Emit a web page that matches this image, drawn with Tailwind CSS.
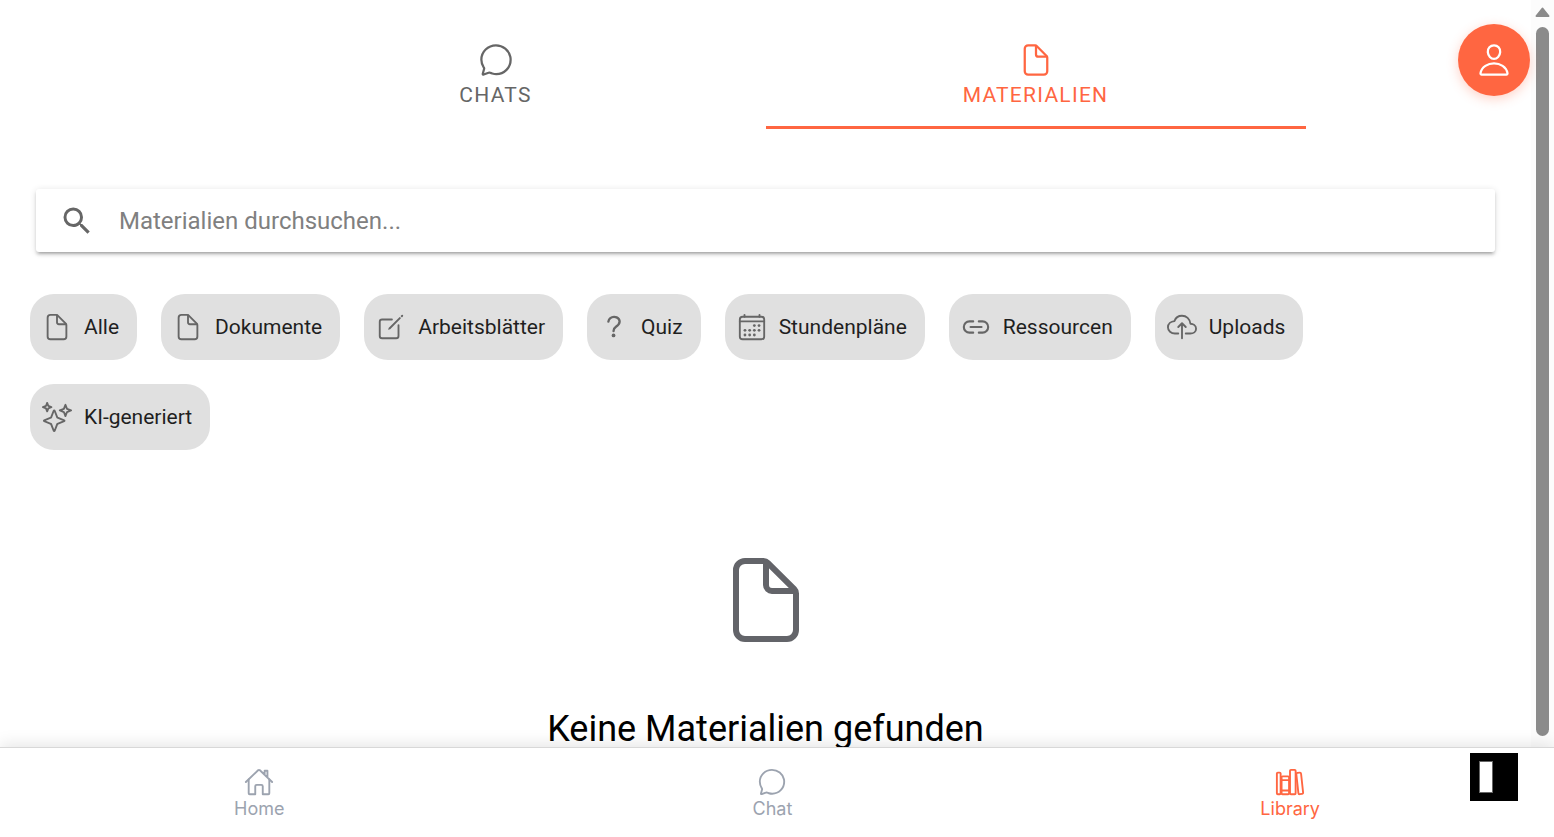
<!DOCTYPE html>
<html lang="de">
<head>
<meta charset="utf-8">
<meta name="viewport" content="width=device-width, initial-scale=1">
<title>Materialien</title>
<script src="https://cdn.jsdelivr.net/npm/@tailwindcss/browser@4"></script>
</head>
<body class="flex h-screen flex-col overflow-hidden bg-white font-['Roboto',sans-serif] text-black">

<svg class="hidden" aria-hidden="true">
  <symbol id="document" viewBox="0 0 512 512" fill="none" stroke="currentColor" stroke-width="32" stroke-linejoin="round" stroke-linecap="round">
    <path d="M416 221.25V416a48 48 0 01-48 48H144a48 48 0 01-48-48V96a48 48 0 0148-48h98.75a32 32 0 0122.62 9.37l141.26 141.26a32 32 0 019.37 22.62z"/>
    <path d="M256 56v120a32 32 0 0032 32h120"/>
  </symbol>
  <symbol id="chat" viewBox="0 0 512 512" fill="none" stroke="currentColor" stroke-width="32" stroke-linecap="round">
    <path d="M87.49 380c1.19-4.38-1.44-10.47-3.95-14.86a44.86 44.86 0 00-2.54-3.8 199.81 199.81 0 01-33-110C47.65 139.09 140.73 48 255.83 48 356.21 48 440 117.54 459.58 209.85a199 199 0 014.42 41.64c0 112.41-89.49 204.93-204.59 204.93-18.3 0-43-4.6-56.47-8.37s-26.92-8.77-30.39-10.11a31.09 31.09 0 00-11.12-2.07 30.71 30.71 0 00-12.09 2.43l-67.83 24.48a16 16 0 01-4.67 1.22 9.6 9.6 0 01-9.57-9.74 15.85 15.85 0 01.6-3.29z"/>
  </symbol>
</svg>

<div class="relative flex min-h-0 flex-1">
  <main class="min-w-0 flex-1 overflow-hidden">
    <div class="flex justify-center" role="tablist">
      <button role="tab" aria-selected="false" class="flex max-w-[540px] flex-1 flex-col items-center gap-0.5 border-b-3 border-transparent pt-[42px] pb-4 text-[21px] leading-[30px] tracking-[0.06em] text-[#666]">
        <svg class="size-9"><use href="#chat"/></svg>
        <span>CHATS</span>
      </button>
      <button role="tab" aria-selected="true" class="flex max-w-[540px] flex-1 flex-col items-center gap-0.5 border-b-3 border-[#ff6641] pt-[42px] pb-4 text-[21px] leading-[30px] tracking-[0.06em] text-[#ff6641]">
        <svg class="size-9"><use href="#document"/></svg>
        <span>MATERIALIEN</span>
      </button>
    </div>

    <div class="px-9 pt-[60px]">
      <label class="flex h-[63px] items-center rounded-[3px] bg-white pt-px pl-[23px] shadow-[0_3px_3px_0_rgba(0,0,0,0.14),0_4px_2px_-3px_rgba(0,0,0,0.2),0_1px_7px_0_rgba(0,0,0,0.12)]">
        <svg class="size-9 shrink-0 text-[#666]" viewBox="0 0 24 24" fill="currentColor"><path d="M15.5 14h-.79l-.28-.27A6.471 6.471 0 0 0 16 9.5 6.5 6.5 0 1 0 9.5 16c1.61 0 3.09-.59 4.23-1.57l.27.28v.79l5 4.99L20.49 19l-4.99-5zm-6 0C7.01 14 5 11.99 5 9.5S7.01 5 9.5 5 14 7.01 14 9.5 11.99 14 9.5 14z"/></svg>
        <input type="search" aria-label="Materialien durchsuchen" placeholder="Materialien durchsuchen..." class="h-full min-w-0 flex-1 pl-6 text-2xl outline-none placeholder:text-[#808080]">
      </label>
    </div>

    <div class="flex flex-wrap gap-6 px-[30px] pt-[42px] text-[21px] leading-[31px] text-[#1f1f1f]">
      <button class="flex h-[66px] items-center gap-3 rounded-3xl bg-[#e0e0e0] pr-[18px] pl-3">
        <svg class="size-[30px] text-[#666]"><use href="#document"/></svg>Alle
      </button>
      <button class="flex h-[66px] items-center gap-3 rounded-3xl bg-[#e0e0e0] pr-[18px] pl-3">
        <svg class="size-[30px] text-[#666]"><use href="#document"/></svg>Dokumente
      </button>
      <button class="flex h-[66px] items-center gap-3 rounded-3xl bg-[#e0e0e0] pr-[18px] pl-3">
        <svg class="size-[30px] text-[#666]" viewBox="0 0 512 512"><path d="M384 224v184a40 40 0 01-40 40H104a40 40 0 01-40-40V168a40 40 0 0140-40h167.48" fill="none" stroke="currentColor" stroke-width="32" stroke-linecap="round" stroke-linejoin="round"/><path fill="currentColor" d="M459.94 53.25a16.06 16.06 0 00-23.22-.56L424.35 65a8 8 0 000 11.31l11.34 11.32a8 8 0 0011.34 0l12.06-12c6.1-6.09 6.67-16.01.85-22.38zM399.34 90L218.82 270.2a9 9 0 00-2.31 3.93L208.16 299a3.91 3.91 0 004.86 4.86l24.85-8.35a9 9 0 003.93-2.31L422 112.66a9 9 0 000-12.66l-9.95-10a9 9 0 00-12.71 0z"/></svg>Arbeitsblätter
      </button>
      <button class="flex h-[66px] items-center gap-3 rounded-3xl bg-[#e0e0e0] pr-[18px] pl-3">
        <svg class="size-[30px] text-[#666]" viewBox="0 0 512 512"><path d="M160 164s1.44-33 33.54-59.46C212.6 88.83 235.49 84.28 256 84c18.73-.23 35.47 2.94 45.48 7.82C318.59 100.2 352 120.6 352 164c0 45.67-29.18 66.37-62.35 89.18S248 298.36 248 324" fill="none" stroke="currentColor" stroke-width="40" stroke-linecap="round"/><circle cx="248" cy="400" r="32" fill="currentColor"/></svg>Quiz
      </button>
      <button class="flex h-[66px] items-center gap-3 rounded-3xl bg-[#e0e0e0] pr-[18px] pl-3">
        <svg class="size-[30px] text-[#666]" viewBox="0 0 512 512"><g fill="none" stroke="currentColor" stroke-width="32" stroke-linecap="round" stroke-linejoin="round"><rect x="48" y="80" width="416" height="384" rx="48"/><path d="M128 48v32M384 48v32M464 160H48"/></g><g fill="currentColor"><circle cx="296" cy="232" r="24"/><circle cx="376" cy="232" r="24"/><circle cx="296" cy="312" r="24"/><circle cx="376" cy="312" r="24"/><circle cx="136" cy="312" r="24"/><circle cx="216" cy="312" r="24"/><circle cx="136" cy="392" r="24"/><circle cx="216" cy="392" r="24"/><circle cx="296" cy="392" r="24"/></g></svg>Stundenpläne
      </button>
      <button class="flex h-[66px] items-center gap-3 rounded-3xl bg-[#e0e0e0] pr-[18px] pl-3">
        <svg class="size-[30px] text-[#666]" viewBox="0 0 512 512" fill="none" stroke="currentColor" stroke-width="36" stroke-linecap="round" stroke-linejoin="round"><path d="M208 352h-64a96 96 0 010-192h64M304 160h64a96 96 0 010 192h-64M163.29 256h187.42"/></svg>Ressourcen
      </button>
      <button class="flex h-[66px] items-center gap-3 rounded-3xl bg-[#e0e0e0] pr-[18px] pl-3">
        <svg class="size-[30px] text-[#666]" viewBox="0 0 512 512" fill="none" stroke="currentColor" stroke-width="32" stroke-linecap="round" stroke-linejoin="round"><path d="M320 367.79h76c55 0 100-29.21 100-83.6s-53-81.47-96-83.6c-8.89-85.06-71-136.8-144-136.8-69 0-113.44 45.79-128 91.2-60 5.7-112 43.88-112 106.4s54 106.4 120 106.4h56"/><path d="M320 255.79l-64-64-64 64M256 448.21V207.79"/></svg>Uploads
      </button>
      <button class="flex h-[66px] items-center gap-3 rounded-3xl bg-[#e0e0e0] pr-[18px] pl-3">
        <svg class="size-[30px] text-[#666]" viewBox="0 0 512 512" fill="none" stroke="currentColor" stroke-width="32" stroke-linecap="round" stroke-linejoin="round"><path d="M259.92 262.91L216.4 149.77a9 9 0 00-16.8 0l-43.52 113.14a9 9 0 01-5.17 5.17L37.77 311.6a9 9 0 000 16.8l113.14 43.52a9 9 0 015.17 5.17l43.52 113.14a9 9 0 0016.8 0l43.52-113.14a9 9 0 015.17-5.17l113.14-43.52a9 9 0 000-16.8l-113.14-43.52a9 9 0 01-5.17-5.17zM108 68L88 16 68 68 16 88l52 20 20 52 20-52 52-20-52-20zM426.67 117.33L400 48l-26.67 69.33L304 144l69.33 26.67L400 240l26.67-69.33L496 144l-69.33-26.67z"/></svg>KI-generiert
      </button>
    </div>

    <div class="flex flex-col items-center gap-[59px] pt-[102px]">
      <svg class="size-24 text-[#636469]"><use href="#document"/></svg>
      <h2 class="text-4xl leading-[45px]">Keine Materialien gefunden</h2>
    </div>
  </main>

  <!-- Scrollbar -->
  <div class="flex w-[23px] flex-col items-center gap-[10px] bg-[#fcfcfc] pt-[7px] pb-[11px]" aria-hidden="true">
    <svg class="h-[10px] w-[15px] shrink-0" viewBox="0 0 15 10" fill="#8b8b8b" stroke="#8b8b8b" stroke-width="2" stroke-linejoin="round"><path d="M7.500 1.500L13.500 9H1.500z"/></svg>
    <div class="w-[13px] flex-1 rounded-full bg-[#8b8b8b]"></div>
  </div>

  <button aria-label="Profil" class="absolute top-6 right-6 flex size-[72px] items-center justify-center rounded-full bg-[#ff6641] text-white shadow-[0_3px_12px_rgba(255,102,65,0.3)]">
    <svg class="size-9" viewBox="0 0 512 512" fill="none" stroke="currentColor" stroke-width="32" stroke-linecap="round" stroke-linejoin="round"><path d="M344 144c-3.92 52.87-44 96-88 96s-84.15-43.12-88-96c-4-55 35-96 88-96s92 42 88 96z"/><path d="M256 304c-87 0-175.3 48-191.64 138.6C62.39 453.52 68.57 464 80 464h352c11.44 0 17.620-10.480 15.650-21.400C431.300 352 343 304 256 304z"/></svg>
  </button>
</div>

<nav class="relative flex h-[90px] shrink-0 border-t border-[#d8d8d8] bg-white font-['Inter',sans-serif] text-lg leading-6 text-[#9ca3af] shadow-[0_-3px_15px_rgba(0,0,0,0.1)]">
  <a href="#home" class="flex flex-auto flex-col items-center pt-[19px]">
    <svg class="size-[30px]" viewBox="0 0 512 512" fill="none" stroke="currentColor" stroke-width="32" stroke-linecap="round" stroke-linejoin="round"><path d="M80 212v236a16 16 0 0016 16h96V328a24 24 0 0124-24h80a24 24 0 0124 24v136h96a16 16 0 0016-16V212"/><path d="M480 256L266.890 52c-5-5.280-16.690-5.340-21.780 0L32 256M400 179V64h-48v69"/></svg>
    Home
  </a>
  <a href="#chat-page" class="flex flex-auto flex-col items-center pt-[19px]">
    <svg class="size-[30px]"><use href="#chat"/></svg>
    Chat
  </a>
  <a href="#library" aria-current="page" class="flex flex-auto flex-col items-center pt-[19px] text-[#ff6641]">
    <svg class="size-[30px]" viewBox="0 0 512 512" fill="none" stroke="currentColor" stroke-width="32" stroke-linecap="round" stroke-linejoin="round"><rect x="32" y="96" width="64" height="368" rx="16"/><path d="M112 224h128M112 400h128"/><rect x="112" y="160" width="128" height="304" rx="16"/><rect x="256" y="48" width="96" height="416" rx="16"/><path d="M422.460 96.110l-40.400 4.250c-11.120 1.170-19.180 11.570-17.930 23.100l34.920 321.590c1.260 11.530 11.370 20 22.490 18.840l40.400-4.250c11.120-1.170 19.180-11.570 17.930-23.100L445 115c-1.310-11.580-11.420-20.060-22.540-18.890z"/></svg>
    Library
  </a>
  <button aria-label="Seitenleiste" class="absolute top-[5px] right-9 flex size-12 items-center bg-black pl-[9px]">
    <span class="h-8 w-[14px] border border-[#666] bg-white"></span>
  </button>
</nav>
</body>
</html>
